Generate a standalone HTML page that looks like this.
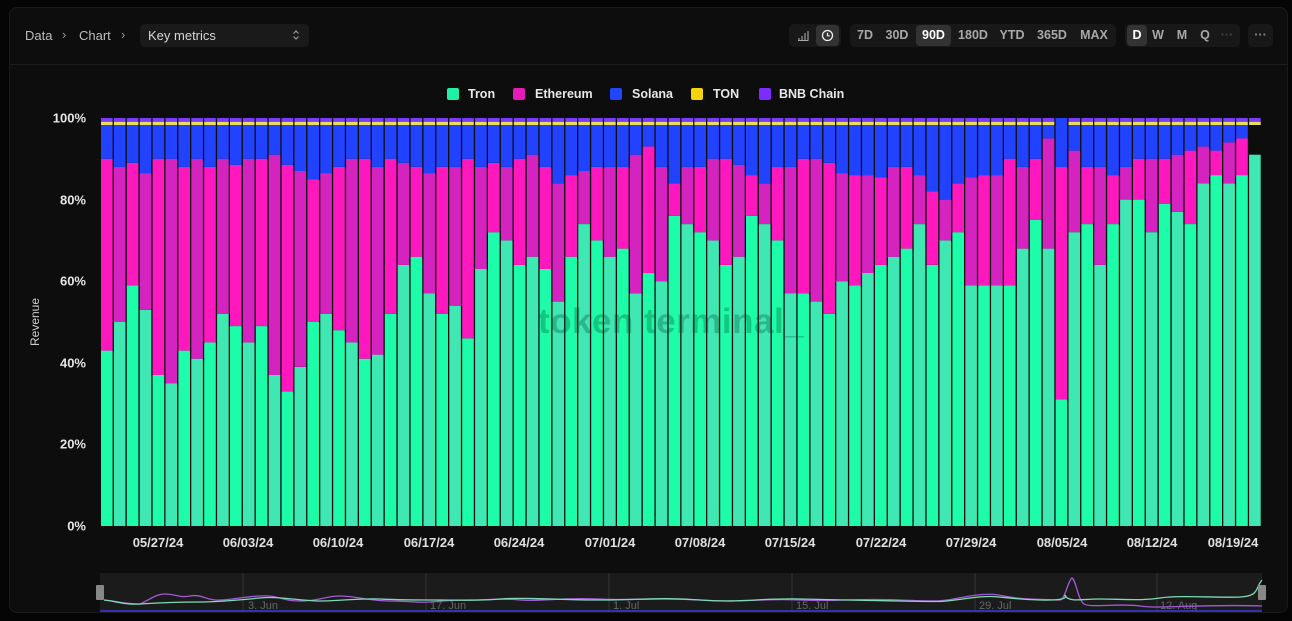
<!DOCTYPE html>
<html><head><meta charset="utf-8">
<style>
*{margin:0;padding:0;box-sizing:border-box}
body{width:1292px;height:621px;background:#050505;font-family:"Liberation Sans",sans-serif;overflow:hidden;position:relative}
.panel{position:absolute;left:9px;top:7px;width:1279px;height:606px;background:#0d0d0d;border:1px solid #1a1a1a;border-radius:8px}
.t{position:absolute;color:#bdbdbd;font-size:13px}
.grp{position:absolute;top:24px;height:23px;background:#181818;border-radius:5px}
.btn{position:absolute;top:0;height:23px;line-height:23px;font-size:12.5px;color:#a8a8a8;text-align:center;font-weight:bold}
.on{background:#333;color:#fff;border-radius:4px}
.lg{position:absolute;top:94px;font-size:12.5px;font-weight:bold;color:#e8e8e8;transform:translateY(-50%)}
.sq{position:absolute;top:88px;width:12px;height:12px;border-radius:2px}
.yl{position:absolute;right:1206px;font-size:13px;font-weight:bold;color:#e6e6e6;transform:translateY(-50%)}
.xl{position:absolute;top:535px;font-size:13px;font-weight:bold;color:#e0e0e0;transform:translateX(-50%)}
</style></head><body>
<div class="panel"></div>
<div style="position:absolute;left:10px;top:64px;width:1277px;height:1px;background:#1c1c1c"></div>
<div class="t" style="left:25px;top:28px">Data</div>
<div class="t" style="left:62px;top:27px;color:#999">›</div>
<div class="t" style="left:79px;top:28px">Chart</div>
<div class="t" style="left:121px;top:27px;color:#999">›</div>
<div style="position:absolute;left:140px;top:24px;width:169px;height:23px;background:#1a1a1a;border-radius:5px"></div>
<div class="t" style="left:148px;top:28px;color:#d6d6d6">Key metrics</div>
<svg style="position:absolute;left:292px;top:29px" width="8" height="12" viewBox="0 0 8 12"><path d="M1.5 4.5L4 2L6.5 4.5M1.5 7.5L4 10L6.5 7.5" stroke="#999" stroke-width="1.2" fill="none"/></svg>

<div class="grp" style="left:789px;width:52px">
 <svg style="position:absolute;left:8px;top:6px" width="12" height="11" viewBox="0 0 12 11"><path d="M2 10V8M5 10V6M8 10V3M11 10V1M1 10.5H11.5" stroke="#aaa" stroke-width="1.1" fill="none"/></svg>
 <div class="on" style="position:absolute;left:27px;top:1px;width:23px;height:21px"></div>
 <svg style="position:absolute;left:32px;top:5px" width="13" height="13" viewBox="0 0 13 13"><circle cx="6.5" cy="6.5" r="5" stroke="#eee" stroke-width="1.3" fill="none"/><path d="M6.5 3.8V6.8H8.8" stroke="#eee" stroke-width="1.2" fill="none"/></svg>
</div>
<div class="grp" style="left:850px;width:266px">
 <div class="btn" style="left:3px;width:24px">7D</div>
 <div class="btn" style="left:31px;width:32px">30D</div>
 <div class="btn on" style="left:66px;width:35px;top:1px;height:21px;line-height:21px">90D</div>
 <div class="btn" style="left:104px;width:38px">180D</div>
 <div class="btn" style="left:146px;width:32px">YTD</div>
 <div class="btn" style="left:182px;width:40px">365D</div>
 <div class="btn" style="left:226px;width:36px">MAX</div>
</div>
<div class="grp" style="left:1125px;width:115px">
 <div class="btn on" style="left:2px;width:20px;top:1px;height:21px;line-height:21px">D</div>
 <div class="btn" style="left:25px;width:16px">W</div>
 <div class="btn" style="left:48px;width:18px">M</div>
 <div class="btn" style="left:72px;width:16px">Q</div>
 <div class="btn" style="left:94px;width:16px;color:#444">···</div>
</div>
<div class="grp" style="left:1248px;width:25px"><div class="btn" style="left:0;width:25px;color:#888">···</div></div>

<div class="sq" style="left:447px;background:#1ff0a6"></div><div class="lg" style="left:468px">Tron</div>
<div class="sq" style="left:513px;background:#e51ab8"></div><div class="lg" style="left:535px">Ethereum</div>
<div class="sq" style="left:610px;background:#2145ff"></div><div class="lg" style="left:632px">Solana</div>
<div class="sq" style="left:691px;background:#f5d20a"></div><div class="lg" style="left:713px">TON</div>
<div class="sq" style="left:759px;background:#7b2cff"></div><div class="lg" style="left:779px">BNB Chain</div>

<div class="yl" style="top:118px">100%</div>
<div class="yl" style="top:200px">80%</div>
<div class="yl" style="top:281px">60%</div>
<div class="yl" style="top:363px">40%</div>
<div class="yl" style="top:444px">20%</div>
<div class="yl" style="top:526px">0%</div>
<div style="position:absolute;left:35px;top:322px;transform:translate(-50%,-50%) rotate(-90deg);font-size:12px;color:#ccc">Revenue</div>

<svg id="ch" style="position:absolute;left:0;top:0" width="1292" height="621"></svg>
<div style="position:absolute;left:538px;top:302px;font-size:35px;font-weight:bold;color:rgba(0,70,45,0.3);letter-spacing:0.5px">token terminal_</div>

<div class="xl" style="left:158px">05/27/24</div>
<div class="xl" style="left:248px">06/03/24</div>
<div class="xl" style="left:338px">06/10/24</div>
<div class="xl" style="left:429px">06/17/24</div>
<div class="xl" style="left:519px">06/24/24</div>
<div class="xl" style="left:610px">07/01/24</div>
<div class="xl" style="left:700px">07/08/24</div>
<div class="xl" style="left:790px">07/15/24</div>
<div class="xl" style="left:881px">07/22/24</div>
<div class="xl" style="left:971px">07/29/24</div>
<div class="xl" style="left:1062px">08/05/24</div>
<div class="xl" style="left:1152px">08/12/24</div>
<div class="xl" style="left:1233px">08/19/24</div>

<svg style="position:absolute;left:0;top:0" width="1292" height="621">
 <rect x="100" y="573" width="1162" height="39" fill="#1b1b1b"/>
 <g stroke="#333" stroke-width="1"><path d="M243 573V612M426 573V612M609 573V612M792 573V612M975 573V612M1157 573V612"/></g>
 <g font-family="Liberation Sans" font-size="11" fill="#666">
  <text x="248" y="609">3. Jun</text><text x="430" y="609">17. Jun</text><text x="613" y="609">1. Jul</text><text x="796" y="609">15. Jul</text><text x="979" y="609">29. Jul</text><text x="1160" y="609">12. Aug</text>
 </g>
 <path d="M100 611H1262" stroke="#3a3adf" stroke-width="1.5"/>
 <path d="M104 600C115 601 125 604 140 604C150 600 155 594 165 594S180 598 190 596S205 599 215 600S240 597 260 596S280 601 300 601S325 596 340 596S370 601 390 601S420 603 430 602S450 600 470 600S500 598 520 600S560 597 600 599S650 597 700 600S760 598 800 600S850 598 900 600S940 601 970 596S1000 598 1030 599S1050 600 1060 600C1065 600 1068 580 1072 578C1076 580 1078 600 1084 604S1120 603 1140 606S1200 604 1262 606" stroke="#a25ad8" stroke-width="1.3" fill="none"/>
 <path d="M104 600C115 601 125 605 140 604S180 602 200 602S240 600 260 598S300 601 320 601S360 598 380 599S420 600 440 600S480 601 500 599S560 600 600 600S660 597 700 600S760 598 800 599S850 600 900 601S940 602 970 598S1000 599 1040 600S1060 592 1066 597S1080 599 1100 599S1140 601 1160 598S1220 598 1240 597S1255 588 1262 580" stroke="#7ddcb4" stroke-width="1.3" fill="none"/>
 <rect x="96" y="585" width="8" height="15" rx="1" fill="#888"/>
 <rect x="1258" y="585" width="8" height="15" rx="1" fill="#888"/>
</svg>

<script>
var g=[43,50,59,53,37,35,43,41,45,52,49,45,49,37,33,39,50,52,48,45,41,42,
52,64,66,57,52,54,46,63,72,70,64,66,63,55,66,74,70,66,68,57,62,60,76,
74,72,70,64,66,76,74,70,57,57,55,52,60,59,62,64,66,68,74,64,70,72,59,
59,59,59,68,75,68,31,72,74,64,74,80,80,72,79,77,74,84,86,84,86,91];
var p=[90,88,89,86.5,90,90,88,90,88,90,88.5,90,90,91,88.5,87,85,86.5,88,90,90,88,
90,89,88,86.5,88,88,90,88,89,88,90,91,88,84,86,87,88,88,88,91,93,88,
84,88,88,90,90,88.5,86,84,88,88,90,90,89,86.5,86,86,85.5,88,88,86,82,80,84,
85.5,86,86,90,88,90,95,88,92,88,88,86,88,90,90,90,91,92,93,92,94,95];
var y0=526,sc=4.08,s='',step=12.9;
for(var i=0;i<90;i++){
 var x=101+i*step,w=11.6;
 var gy=g[i],py=p[i],by=(i==74)?100:98.3,ty=(i==74)?100:99.1;
 function r(a,b,c){return '<rect x="'+x.toFixed(1)+'" y="'+(y0-b*sc).toFixed(1)+'" width="'+w+'" height="'+((b-a)*sc).toFixed(1)+'" fill="'+c+'"/>';}
 s+=r(0,gy,i%2?'#3fe8b2':'#1dfca8');
 s+=r(gy,py,i%2?'#d523c0':'#ff18bd');
 s+=r(py,by,'#2142ff');
 if(i!=74)s+=r(by,ty,'#e8dc5a');
 s+=r(ty,100,'#7a3cff');
}
document.getElementById('ch').innerHTML=s;
</script>
</body></html>
